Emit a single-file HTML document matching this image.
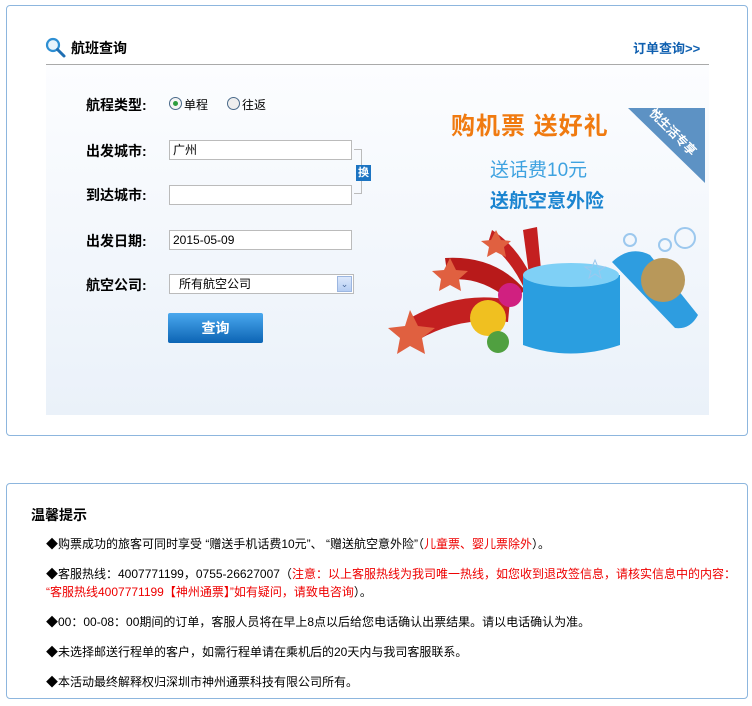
<!DOCTYPE html>
<html><head><meta charset="utf-8"><style>
*{margin:0;padding:0;box-sizing:border-box}
body{width:752px;height:706px;background:#fff;font-family:"Liberation Sans","WenQuanYi Zen Hei","Noto Sans CJK SC",sans-serif;font-size:12px;color:#000;position:relative;overflow:hidden}
.box{position:absolute;border:1px solid #8db6de;border-radius:4px;background:#fff}
.abs{position:absolute}
.lbl{position:absolute;left:86px;font-size:14px;font-weight:bold}
.inp{position:absolute;left:169px;width:183px;height:20px;border:1px solid #bbb;background:#fff;font-size:12px;padding:1px 0 0 3px;line-height:16px}
.tip{position:absolute;left:46px;font-size:12px;white-space:nowrap}
.red{color:#e00}
</style></head><body>
<div class="box" style="left:6px;top:5px;width:742px;height:431px"></div>
<svg class="abs" style="left:44px;top:36px" width="24" height="24" viewBox="0 0 24 24"><circle cx="9" cy="9" r="6" fill="#e8f4fc" stroke="#2e8fd3" stroke-width="2.2"/><path d="M13.5 13.5L20 20" stroke="#1f6fb3" stroke-width="3" stroke-linecap="round"/></svg>
<div class="abs" style="left:71px;top:38px;font-size:14px;font-weight:bold">航班查询</div>
<div class="abs" style="left:633px;top:38px;font-size:13px;font-weight:bold;color:#1060b0">订单查询&gt;&gt;</div>
<div class="abs" style="left:46px;top:64px;width:663px;height:1px;background:#aaa"></div>
<div class="abs" style="left:46px;top:65px;width:663px;height:350px;background:linear-gradient(#fcfdff,#eaf1f9)"></div>

<div class="lbl" style="top:95px">航程类型:</div>
<div class="abs" style="left:169px;top:97px;width:13px;height:13px;border-radius:50%;border:1px solid #4a6a8a;background:#f4f4f4"><div style="margin:3px;width:5px;height:5px;border-radius:50%;background:#2c9c3c"></div></div>
<div class="abs" style="left:184px;top:96px;font-size:12px">单程</div>
<div class="abs" style="left:227px;top:97px;width:13px;height:13px;border-radius:50%;border:1px solid #4a6a8a;background:#eee"></div>
<div class="abs" style="left:242px;top:96px;font-size:12px">往返</div>

<div class="lbl" style="top:141px">出发城市:</div>
<div class="inp" style="top:140px">广州</div>
<div class="lbl" style="top:185px">到达城市:</div>
<div class="inp" style="top:185px"></div>
<div class="abs" style="left:354px;top:149px;width:8px;height:45px;border:1px solid #bbb;border-left:none"></div>
<div class="abs" style="left:356px;top:165px;width:15px;height:16px;background:#1c74c2;color:#fff;font-size:11px;font-weight:bold;text-align:center;line-height:16px">换</div>

<div class="lbl" style="top:231px">出发日期:</div>
<div class="inp" style="top:230px">2015-05-09</div>
<div class="lbl" style="top:275px">航空公司:</div>
<div class="inp" style="top:274px;width:185px;padding-left:9px">所有航空公司</div>
<div class="abs" style="left:337px;top:276px;width:15px;height:16px;background:linear-gradient(#dce8fb,#b5cdf3);border:1px solid #9cb6e0;color:#4a6a9a;font-size:9px;text-align:center;line-height:14px">⌄</div>
<div class="abs" style="left:168px;top:313px;width:95px;height:30px;background:linear-gradient(#4aa8ee,#0c64b4);border-radius:2px;color:#fff;font-size:14px;font-weight:bold;text-align:center;line-height:30px">查询</div>

<!-- promo -->
<div class="abs" style="left:451px;top:106px;font-size:24px;font-weight:bold;color:#f07a10;letter-spacing:1px">购机票 送好礼</div>
<div class="abs" style="left:490px;top:155px;font-size:19px;color:#3ea2e0">送话费10元</div>
<div class="abs" style="left:490px;top:186px;font-size:19px;font-weight:bold;color:#1a84d0">送航空意外险</div>
<svg class="abs" style="left:380px;top:90px" width="330" height="300">
<polygon points="248,18 325,18 325,93" fill="#5d92c4"/>
<text x="290" y="45" transform="rotate(45 290 45)" font-size="12" font-weight="bold" fill="#fff" text-anchor="middle" font-family="WenQuanYi Zen Hei">悦生活专享</text>
<path d="M30 228 Q80 200 130 210 L128 232 Q80 226 38 250Z" fill="#c32020"/>
<path d="M65 168 Q115 165 145 200 L132 212 Q100 185 68 190Z" fill="#b81a1a"/>
<path d="M112 140 Q140 158 155 195 L145 200 Q130 168 108 153Z" fill="#c42020"/>
<path d="M143 140 L157 137 L162 190 L150 192Z" fill="#c42020"/>
<polygon points="30,220 38,236 55,238 42,248 45,264 30,256 17,264 20,248 8,238 25,236" fill="#e06040"/>
<polygon points="70,168 76,180 88,181 79,189 81,201 70,195 59,201 61,189 52,181 64,180" fill="#e06040"/>
<polygon points="116,140 121,150 131,151 124,157 126,167 116,162 107,167 109,157 101,151 111,150" fill="#e06040"/>
<circle cx="108" cy="228" r="18" fill="#f0c020"/><circle cx="130" cy="205" r="12" fill="#d02080"/><circle cx="118" cy="252" r="11" fill="#50a040"/>
<path d="M143 185 L143 255 Q190 272 240 255 L240 185Z" fill="#2a9ee0"/>
<ellipse cx="191" cy="185" rx="48" ry="12" fill="#7fd0f6"/>
<path d="M232 172 Q250 155 270 165 L318 225 Q310 240 295 238 Z" fill="#2e9de0"/>
<circle cx="283" cy="190" r="22" fill="#b8985a"/>
<circle cx="250" cy="150" r="6" fill="none" stroke="#9cc8ee" stroke-width="2"/><circle cx="305" cy="148" r="10" fill="none" stroke="#9cc8ee" stroke-width="2"/><circle cx="285" cy="155" r="6" fill="none" stroke="#9cc8ee" stroke-width="2"/>
<polygon points="215,170 218,177 225,177 219,181 221,188 215,184 209,188 211,181 205,177 212,177" fill="none" stroke="#9cc8ee"/>
</svg>

<div class="box" style="left:6px;top:483px;width:742px;height:216px"></div>
<div class="abs" style="left:31px;top:505px;font-size:14px;font-weight:bold">温馨提示</div>
<div class="tip" style="top:535px">◆购票成功的旅客可同时享受 “赠送手机话费10元”、 “赠送航空意外险”（<span class="red">儿童票、婴儿票除外</span>）。</div>
<div class="tip" style="top:565px">◆客服热线：4007771199，0755-26627007（<span class="red">注意：以上客服热线为我司唯一热线，如您收到退改签信息，请核实信息中的内容：</span></div>
<div class="tip" style="top:583px"><span class="red">“客服热线4007771199【神州通票】”如有疑问，请致电咨询</span>）。</div>
<div class="tip" style="top:613px">◆00：00-08：00期间的订单，客服人员将在早上8点以后给您电话确认出票结果。请以电话确认为准。</div>
<div class="tip" style="top:643px">◆未选择邮送行程单的客户，如需行程单请在乘机后的20天内与我司客服联系。</div>
<div class="tip" style="top:673px">◆本活动最终解释权归深圳市神州通票科技有限公司所有。</div>
</body></html>
